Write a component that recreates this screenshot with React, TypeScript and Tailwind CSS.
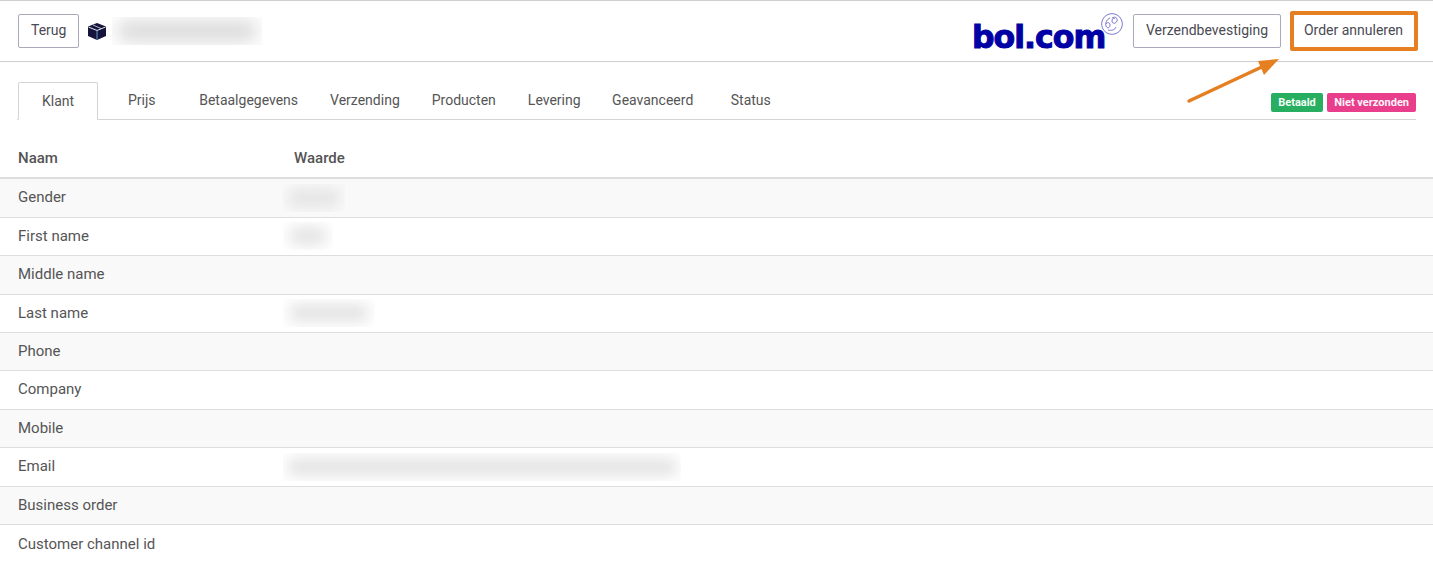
const tabs = ['Klant', 'Prijs', 'Betaalgegevens', 'Verzending', 'Producten', 'Levering', 'Geavanceerd', 'Status']

const rows = [
  { name: 'Gender', blur: 'w-[62px]', inner: 'w-[50px]' },
  { name: 'First name', blur: 'w-[50px]', inner: 'w-[36px]' },
  { name: 'Middle name' },
  { name: 'Last name', blur: 'w-[92px]', inner: 'w-[78px]' },
  { name: 'Phone' },
  { name: 'Company' },
  { name: 'Mobile' },
  { name: 'Email', blur: 'w-[398px]', inner: 'w-[388px]' },
  { name: 'Business order' },
  { name: 'Customer channel id' },
]

function Redacted({ blur, inner }: { blur: string; inner: string }) {
  return (
    <div className={`flex h-[28px] items-center justify-center overflow-hidden ${blur}`}>
      <div className={`h-[18px] bg-[#e4e4e4] blur-[7px] ${inner}`} />
    </div>
  )
}

function Button({ label }: { label: string }) {
  return (
    <button
      type="button"
      className="h-[34px] rounded-[2px] border border-[#a9a9bb] bg-white px-[12px] pb-[2px] text-[14px] text-[#4a4a52]"
    >
      {label}
    </button>
  )
}

export default function App() {
  return (
    <div className="relative h-[580px] w-[1433px] overflow-hidden bg-white font-['Roboto',sans-serif] text-[15px] text-[#555]">
      <header className="flex h-[62px] items-center justify-between border-t border-b border-[#cfcfcf] pr-[15px] pl-[18px]">
        <div className="flex items-center">
          <Button label="Terug" />
          <svg viewBox="0 0 18 17" className="ml-[9px] h-[17px] w-[18px]" aria-hidden>
            <path d="M9 0 L18 3.5 V13 L9 17 L0 13 V3.5 Z" fill="#14143c" />
            <path d="M0.5 4 L9 7.5 L17.5 4" stroke="#ffffff" strokeWidth="0.9" fill="none" />
            <path d="M9 7.5 V16.5" stroke="#6fa8dc" strokeWidth="0.9" />
            <path d="M5 2 L13 5.5" stroke="#ffffff" strokeWidth="0.7" />
          </svg>
          <div className="ml-[6px] flex h-[28px] w-[150px] items-center justify-center overflow-hidden">
            <div className="h-[20px] w-[138px] bg-[#d8d8d8] blur-[9px]" />
          </div>
        </div>
        <div className="flex items-center">
          <div className="relative mr-[10px] flex h-[40px] w-[151px] items-end">
            <span className="font-['DejaVu_Sans',sans-serif] text-[31.5px] leading-[27px] font-bold tracking-[-0.95px] text-[#0000a4] [-webkit-text-stroke:1px_#0000a4]">
              bol.com
            </span>
            <svg viewBox="0 0 22 22" className="absolute top-[2px] right-0 h-[22px] w-[22px]" fill="none" stroke="#5a5ac4" strokeWidth="0.8" aria-hidden>
              <circle cx="11" cy="11" r="10.4" />
              <path d="M9 5c-3 1-5 5-4 8s4 2 4-1-3-3-4-1" />
              <path d="M11 5c3-2 6 0 5 3s-5 3-5 0 2-3 3-2" />
              <path d="M7 17c3 1 7 0 8-3" />
            </svg>
          </div>
          <Button label="Verzendbevestiging" />
          <button
            type="button"
            className="ml-[9px] h-[40px] w-[128px] rounded-[2px] border-[4px] border-[#e67e22] bg-white pr-[1px] pb-[2px] text-[14px] text-[#4a4a52]"
          >
            Order annuleren
          </button>
        </div>
      </header>

      <nav className="mx-[17px] mt-[20px] flex h-[38px] items-end justify-between border-b border-[#d4d4d4] pl-px text-[14px]">
        <div className="flex">
          {tabs.map((tab, i) => (
            <div
              key={tab}
              className={
                i === 0
                  ? 'z-10 -mb-px flex h-[38px] w-[80px] items-center justify-center rounded-t-[2px] border border-b-white border-[#d4d4d4] bg-white'
                  : 'flex h-[37px] items-center px-[16px] ' +
                    (i === 1 ? 'ml-[14px] mr-[11.6px]' : i === 5 ? 'mr-[-0.5px]' : i === 6 ? 'mr-[5.5px]' : '')
              }
            >
              <span>{tab}</span>
            </div>
          ))}
        </div>
        <div className="mb-[7px] flex gap-[4px] font-['Roboto',sans-serif] text-[11px] leading-[19px] font-bold text-[#f4fff8]">
          <span className="h-[19px] rounded-[2px] bg-[#27ae60] px-[7.5px]">Betaald</span>
          <span className="h-[19px] rounded-[2px] bg-[#e83e8c] px-[7px] text-[#fff4fa]">Niet verzonden</span>
        </div>
      </nav>

      <section className="mt-[20px]">
        <div className="grid h-[39.3px] grid-cols-[276px_1fr] items-center border-b-2 border-[#dedede] pl-[18px] font-medium">
          <span>Naam</span>
          <span>Waarde</span>
        </div>
        {rows.map((row, i) => (
          <div
            key={row.name}
            className={
              'grid h-[38.44px] grid-cols-[265px_1fr] items-center pl-[18px] ' +
              (i % 2 === 0 ? 'bg-[#f9f9f9] ' : 'bg-white ') +
              (i < rows.length - 1 ? 'border-b border-[#dedede]' : '')
            }
          >
            <span className="-mt-[1px]">{row.name}</span>
            {row.blur && row.inner ? <Redacted blur={row.blur} inner={row.inner} /> : <span />}
          </div>
        ))}
      </section>

      {/* annotation arrow pointing at the cancel button */}
      <svg className="absolute top-[55px] left-[1180px] h-[55px] w-[105px]" viewBox="0 0 105 55" fill="none" aria-hidden>
        <path d="M9 46 L86 10" stroke="#e67e22" strokeWidth="3.5" strokeLinecap="round" />
        <path d="M99 4 L78 6 L84 20 Z" fill="#e67e22" />
      </svg>
    </div>
  )
}
